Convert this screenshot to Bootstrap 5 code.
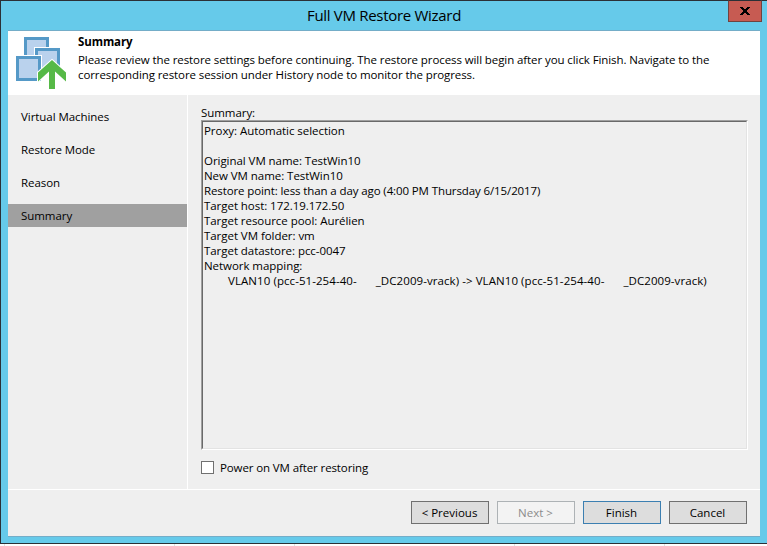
<!DOCTYPE html>
<html lang="en">
<head>
<meta charset="utf-8">
<title>Full VM Restore Wizard</title>
<link href="https://cdn.jsdelivr.net/npm/bootstrap@5.3.0/dist/css/bootstrap.min.css" rel="stylesheet">
<style>
body{width:767px;height:546px;overflow:hidden;background:#fff;color:#000;font:11.5px/15px "Open Sans","Noto Sans",sans-serif}
.wizard{height:544px;background:#66caea;border:solid #2b3036;border-width:1px 0 1px 1px;padding:0 7px 6px}
.titlebar{height:29px}
.title-text{font-size:15px;line-height:28px;letter-spacing:-.3px}
.close-btn{right:-2px;top:-1px;width:34px;height:22px;background:#c75b52;border:1px solid #70423f;border-top-color:#2b3036}
.client{height:507px;background:#efefef;border:solid #74adc8;border-width:1px 0}
.banner{height:64px;padding:3px 0 0 8px}
.emblem{margin-top:1px;overflow:visible}
.banner-text{margin-left:11px;letter-spacing:-.09px}
.banner-text strong{display:block;line-height:15px;margin-bottom:3px}
.steps{width:180px;border-right:1px solid #fff;padding-top:10px;letter-spacing:-.06px}
.step{height:23px;margin-bottom:10px;padding-left:13px;line-height:23px;width:179px}
.step.current{background:#a0a0a0}
.pane{padding:10px 12px 0 13px}
.pane-label{letter-spacing:-.06px}
.report{height:330px;border:1px solid;border-color:#a0a0a0 #fff #fff #a0a0a0}
.report-in{height:328px;border:1px solid;border-color:#696969 #e3e3e3 #e3e3e3 #696969;padding:1px;white-space:pre;letter-spacing:-.05px}
.restore-point{letter-spacing:-.11px}
.mapping{padding-left:24px;letter-spacing:.07px}
.gap-id{display:inline-block;width:19px}
.power{margin-top:11px;height:13px;gap:6px;letter-spacing:-.11px}
.power input{appearance:none;width:13px;height:13px;background:#fff;border:1px solid #707070;margin:0}
.footer-bar{height:47px;border-top:1px solid #fff;padding:11px 13px 0 0}
.wbtn{width:78px;height:23px;padding:0 1px 0 0;border:1px solid #707070;border-radius:0;background:#ddd;color:#000;font-size:11.5px;line-height:21px}
.wbtn:disabled{background:#f3f3f3;border-color:#adb2b5;color:#8c8c8c;opacity:1}
.wbtn.primary{border-color:#3c7fb1}
.ticks{height:2px;padding-left:4px}
.ticks span{width:1px;height:2px;background:#e2e2e2}
.ticks span:nth-child(2){margin-left:169px}
.ticks span:nth-child(3){margin-left:119px}
.ticks span:nth-child(4){margin-left:219px}
.ticks span:nth-child(5){margin-left:149px}
</style>
<script src="https://cdn.jsdelivr.net/npm/bootstrap@5.3.0/dist/js/bootstrap.bundle.min.js"></script>
</head>
<body>
<div class="wizard">
  <div class="titlebar position-relative text-center">
    <span class="title-text">Full VM Restore Wizard</span>
    <button class="close-btn position-absolute p-0 d-flex align-items-center justify-content-center" aria-label="Close">
      <svg width="10" height="8" viewBox="0 0 10 8" shape-rendering="crispEdges"><path d="M0 0H3V1H4V2H6V1H7V0H10V1H9V2H8V3H7V5H8V6H9V7H10V8H7V7H6V6H4V7H3V8H0V7H1V6H2V5H3V3H2V2H1V1H0Z"/></svg>
    </button>
  </div>
  <div class="client d-flex flex-column">
    <div class="banner bg-white d-flex">
      <svg width="51" height="54" viewBox="0 0 51 54" class="emblem flex-shrink-0">
        <g fill="#bad2ed" stroke="#5599c7" stroke-width="3">
          <path d="M9.500 3.500h22v22h-22z"/>
          <path stroke="#fff" stroke-width="5" d="M20.500 14.500h22v22h-22z"/><path d="M20.500 14.500h22v22h-22z"/>
          <path stroke="#fff" stroke-width="5" d="M1.500 22.500h22v22h-22z"/><path d="M1.500 22.500h22v22h-22z"/>
        </g>
        <path fill="#56b947" stroke="#fff" stroke-width="2" paint-order="stroke" d="M36 25L50 37.500V46.500L39 36.500V54H33V36.500L22 46.500V37.500z"/>
      </svg>
      <div class="banner-text"><strong>Summary</strong><div>Please review the restore settings before continuing. The restore process will begin after you click Finish. Navigate to the</div><div>corresponding restore session under History node to monitor the progress.</div></div>
    </div>
    <div class="d-flex flex-grow-1">
      <nav class="steps flex-shrink-0">
        <div class="step">Virtual Machines</div>
        <div class="step">Restore Mode</div>
        <div class="step">Reason</div>
        <div class="step current">Summary</div>
      </nav>
      <main class="pane flex-grow-1">
        <div class="pane-label">Summary:</div>
        <div class="report"><div class="report-in"><div>Proxy: Automatic selection</div><div>&nbsp;</div><div>Original VM name: TestWin10</div><div>New VM name: TestWin10</div><div class="restore-point">Restore point: less than a day ago (4:00 PM Thursday 6/15/2017)</div><div>Target host: 172.19.172.50</div><div>Target resource pool: Aurélien</div><div>Target VM folder: vm</div><div>Target datastore: pcc-0047</div><div>Network mapping:</div><div class="mapping">VLAN10 (pcc-51-254-40-<span class="gap-id"></span>_DC2009-vrack) -&gt; VLAN10 (pcc-51-254-40-<span class="gap-id"></span>_DC2009-vrack)</div></div></div>
        <label class="power d-flex align-items-center"><input type="checkbox"><span>Power on VM after restoring</span></label>
      </main>
    </div>
    <div class="footer-bar d-flex justify-content-end align-items-start gap-2">
      <button class="btn wbtn">&lt; Previous</button>
      <button class="btn wbtn" disabled>Next &gt;</button>
      <button class="btn wbtn primary">Finish</button>
      <button class="btn wbtn">Cancel</button>
    </div>
  </div>
</div>
<div class="ticks d-flex"><span></span><span></span><span></span><span></span><span></span></div>
</body>
</html>
